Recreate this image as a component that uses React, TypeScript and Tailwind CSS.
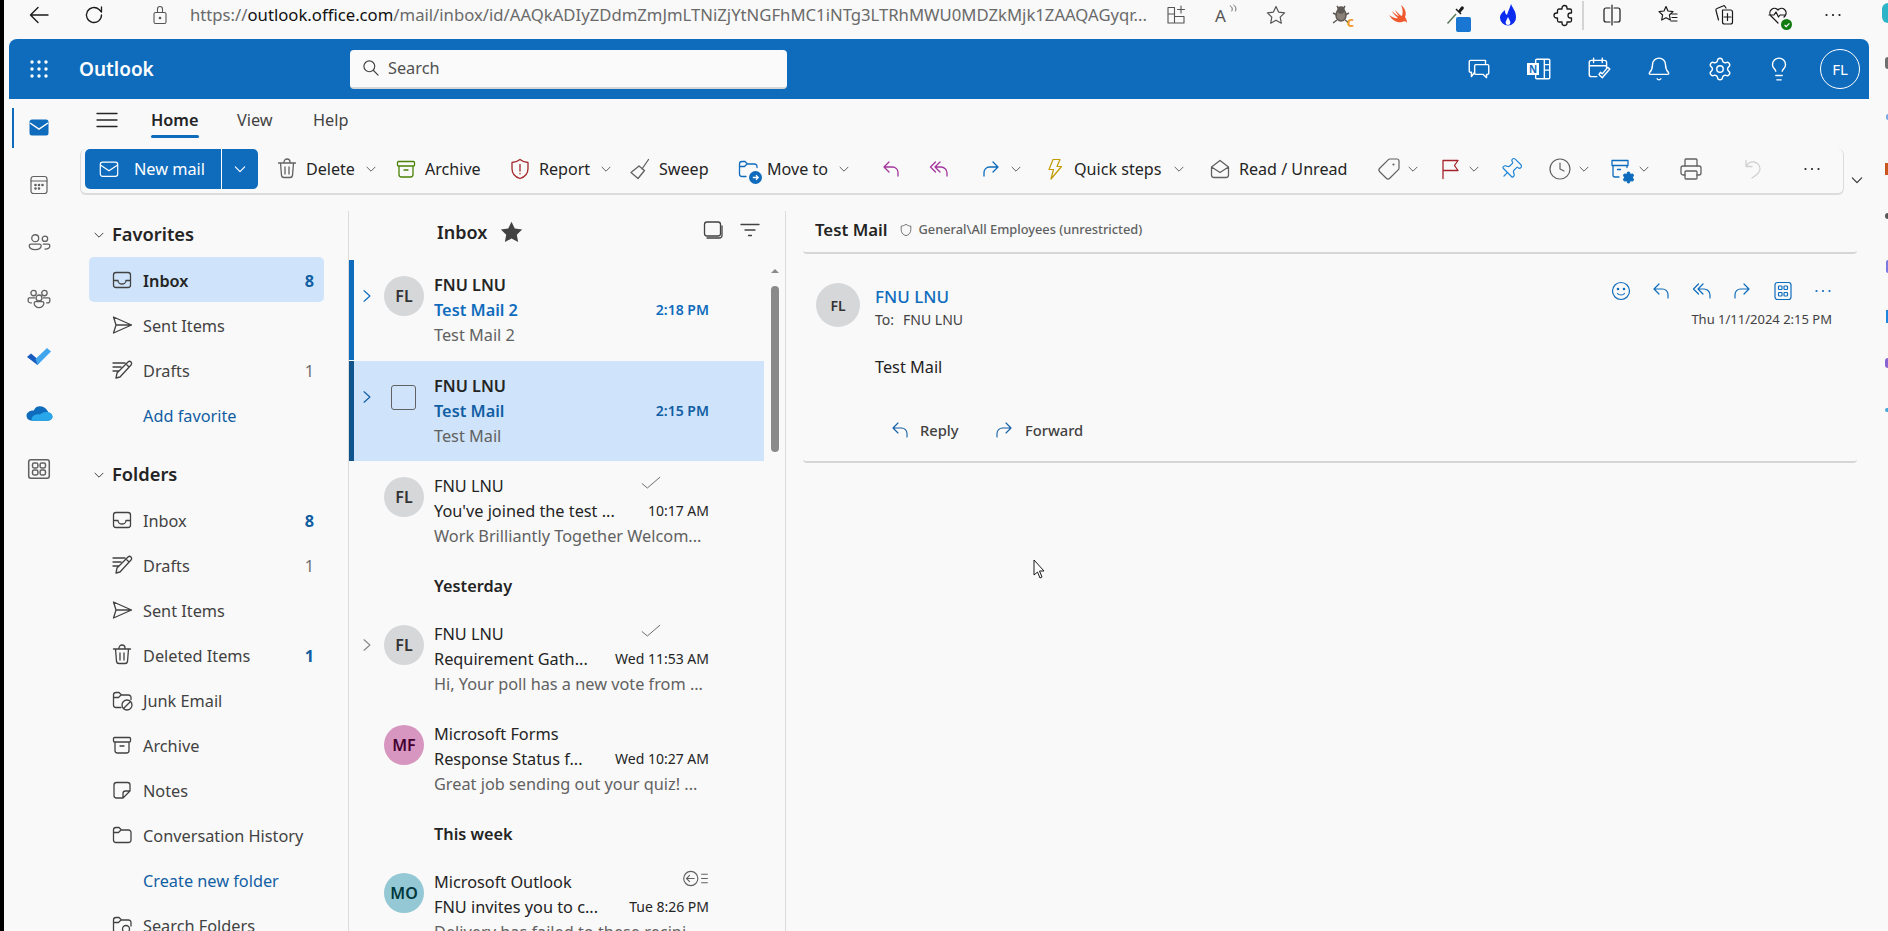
import type { ReactNode } from "react";
import { Settings, Lightbulb, Bell, Tag, Pin, Printer, Clock } from "lucide-react";

function Ico({ className, children, sw = 1.3 }: { className?: string; children: ReactNode; sw?: number }) {
  return (
    <svg viewBox="0 0 24 24" fill="none" stroke="currentColor" strokeWidth={sw} strokeLinecap="round" strokeLinejoin="round" className={className ?? "w-6 h-6 shrink-0"}>
      {children}
    </svg>
  );
}

function Chevron({ className }: { className: string }) {
  return (
    <svg viewBox="0 0 12 12" fill="none" stroke="currentColor" strokeWidth="1" strokeLinecap="round" strokeLinejoin="round" className={className}>
      <path d="M2 4.2L6 8.2L10 4.2" />
    </svg>
  );
}

const replyPath = <path d="M10 5L5 10l5 5M5 10h8.5a5.5 5.5 0 0 1 5.5 5.5V19" />;
const replyAllPath = <path d="M8.5 5L3.5 10l5 5M13 5l-5 5 5 5M8 10h6a6 6 0 0 1 6 6v3" />;
const forwardPath = <path d="M14 5l5 5-5 5M19 10h-8.5A5.5 5.5 0 0 0 5 15.5V19" />;
const moreDots = (
  <>
    <circle cx="5.5" cy="12" r="1.1" fill="currentColor" stroke="none" />
    <circle cx="12" cy="12" r="1.1" fill="currentColor" stroke="none" />
    <circle cx="18.5" cy="12" r="1.1" fill="currentColor" stroke="none" />
  </>
);
const inboxIcon = <path d="M6 4.5h12A2.5 2.5 0 0 1 20.5 7v10a2.5 2.5 0 0 1-2.5 2.5H6A2.5 2.5 0 0 1 3.5 17V7A2.5 2.5 0 0 1 6 4.5zM3.5 12.5H8a4 3.5 0 0 0 8 0h4.5" />;
const sendIcon = <path d="M3.5 4l18 8-18 8 2.5-8zM6 12h15.5" />;
const draftsIcon = <path d="M3 5h12M3 9h8M3 13h5M6 20l1-5L18 4a2 2 0 0 1 3 3L10 19zM16 6l3 3" />;
const trashIcon = <path d="M3.5 6h17M9 6V5a3 3 0 0 1 6 0v1M5.5 6l1 12.5a2.5 2.5 0 0 0 2.5 2h6a2.5 2.5 0 0 0 2.5-2l1-12.5M10 10v7M14 10v7" />;
const folderIcon = <path d="M3.5 7A2.5 2.5 0 0 1 6 4.5h3l2.5 2.5h7A2.5 2.5 0 0 1 21 9.5V17a2.5 2.5 0 0 1-2.5 2.5H6A2.5 2.5 0 0 1 3.5 17zM3.5 9.5h5l2.5-2.5" />;
const junkIcon = (
  <>
    <path d="M11 19.5H6A2.5 2.5 0 0 1 3.5 17V7A2.5 2.5 0 0 1 6 4.5h3L11.5 7h7A2.5 2.5 0 0 1 21 9.5v2M3.5 9.5h5L11 7" />
    <circle cx="17" cy="17" r="5" />
    <path d="M13.5 20.5l7-7" />
  </>
);
const archiveIcon = <path d="M4.5 4.5h15a1 1 0 0 1 1 1V8a1 1 0 0 1-1 1h-15a1 1 0 0 1-1-1V5.5a1 1 0 0 1 1-1zM5 9v8.5A2.5 2.5 0 0 0 7.5 20h9a2.5 2.5 0 0 0 2.5-2.5V9M10 13h4" />;
const notesIcon = <path d="M6.5 4.5h11A2.5 2.5 0 0 1 20 7v6l-7 7H6.5A2.5 2.5 0 0 1 4 17.5V7a2.5 2.5 0 0 1 2.5-2.5zM20 13h-4.5a2.5 2.5 0 0 0-2.5 2.5V20" />;
const searchFolderIcon = (
  <>
    <path d="M11 19.5H6A2.5 2.5 0 0 1 3.5 17V7A2.5 2.5 0 0 1 6 4.5h3L11.5 7h7A2.5 2.5 0 0 1 21 9.5V13M3.5 9.5h5L11 7" />
    <circle cx="16" cy="16" r="3.5" />
  </>
);

function FolderRow({ icon, label, count, active, strong, link }: { icon?: ReactNode; label: string; count?: string; active?: boolean; strong?: boolean; link?: boolean }) {
  return (
    <div className={active ? "h-[45px] w-[235px] ml-[11px] pl-[21px] pr-[10px] flex items-center rounded-[5px] bg-[#cfe4fa]" : "h-[45px] w-[235px] ml-[11px] pl-[21px] pr-[10px] flex items-center"}>
      <span className="w-6 h-6 shrink-0 text-[#424242]">{icon && <Ico>{icon}</Ico>}</span>
      <span className={link ? "ml-[9px] pt-[3px] text-[16.3px] text-[#115ea3]" : active ? "ml-[9px] pt-[3px] text-[16.3px] font-semibold text-[#242424]" : "ml-[9px] pt-[3px] text-[16.3px] text-[#424242]"}>{label}</span>
      {count && <span className={strong ? "ml-auto pt-[3px] text-[16.3px] font-bold text-[#115ea3]" : "ml-auto pt-[3px] text-[16.3px] text-[#707070]"}>{count}</span>}
    </div>
  );
}

function FolderHeader({ label, className }: { label: string; className?: string }) {
  return (
    <div className={className ?? "h-[45px] flex items-center pl-[15px]"}>
      <Chevron className="w-3 h-3 text-[#424242] shrink-0" />
      <span className="ml-[7px] pb-[2px] text-[18.3px] font-semibold text-[#242424]">{label}</span>
    </div>
  );
}

function ToolItem({ width, icon, label, chevron, chevronGap }: { width: string; icon: ReactNode; label?: string; chevron?: boolean; chevronGap?: string }) {
  return (
    <div className={`${width} h-10 flex items-center shrink-0`}>
      {icon}
      {label && <span className="ml-[7px] pt-[1px] text-[16.1px] text-[#242424] whitespace-nowrap">{label}</span>}
      {chevron && <Chevron className={`${chevronGap ?? "ml-[10px]"} w-3 h-3 text-[#616161] shrink-0`} />}
    </div>
  );
}

function Avatar({ initials, className }: { initials: string; className: string }) {
  return <div className={`w-10 h-10 shrink-0 rounded-full flex items-center justify-center text-[16px] font-semibold ${className}`}>{initials}</div>;
}

type Mail = {
  from: string;
  subject: string;
  preview: string;
  time: string;
  initials?: string;
  avatar?: string;
  bar?: string;
  unread?: boolean;
  selected?: boolean;
  chevron?: string;
  status?: "check" | "back";
};

function MailItem({ m }: { m: Mail }) {
  return (
    <div className={m.selected ? "h-[100px] flex shrink-0 bg-[#cfe4fa]" : "h-[100px] flex shrink-0"}>
      <div className={`w-[5px] shrink-0 ${m.bar ?? ""}`} />
      <div className="w-[30px] shrink-0 pl-[6px] pt-[29px]">
        {m.chevron && (
          <svg viewBox="0 0 12 12" fill="none" stroke="currentColor" strokeWidth="1" strokeLinecap="round" strokeLinejoin="round" className={`w-[14px] h-[14px] ${m.chevron}`}>
            <path d="M3.5 1.5L8.5 6L3.5 10.5" />
          </svg>
        )}
      </div>
      <div className="w-10 shrink-0 pt-[16px]">
        {m.initials ? (
          <Avatar initials={m.initials} className={m.avatar ?? ""} />
        ) : (
          <div className="mt-[8px] ml-[7px] w-[25px] h-[25px] border border-[#616161] rounded-[3px]" />
        )}
      </div>
      <div className="ml-[10px] w-[275px] pt-[12px]">
        <div className="h-[25px] flex items-center justify-between">
          <span className={m.unread ? "pt-[1px] text-[16.3px] font-semibold text-[#242424]" : "pt-[1px] text-[16.3px] text-[#242424]"}>{m.from}</span>
          {m.status === "check" && (
            <svg viewBox="0 0 24 16" fill="none" stroke="currentColor" strokeWidth="1" className="w-[22px] h-[15px] text-[#616161] mr-[47px] -mt-[6px]">
              <path d="M2 9l6 5L22 2" />
            </svg>
          )}
          {m.status === "back" && (
            <svg viewBox="0 0 28 18" fill="none" stroke="currentColor" strokeWidth="1.2" className="w-[27px] h-[17px] text-[#616161] -mt-[6px]">
              <circle cx="9" cy="9" r="7.5" />
              <path d="M13 9H5M8 5.5L4.5 9 8 12.5M20 4.5h7M20 9h7M20 13.5h7" />
            </svg>
          )}
        </div>
        <div className="h-[25px] flex items-center justify-between">
          <span className={m.selected ? "pt-[1px] text-[16.3px] font-semibold text-[#115ea3]" : m.unread ? "pt-[1px] text-[16.3px] font-semibold text-[#0f6cbd]" : "pt-[1px] text-[16.3px] text-[#242424]"}>{m.subject}</span>
          <span className={m.selected ? "-mt-[1px] text-[14px] font-semibold text-[#115ea3]" : m.unread ? "-mt-[1px] text-[14px] font-semibold text-[#0f6cbd]" : "-mt-[1px] text-[14px] text-[#242424]"}>{m.time}</span>
        </div>
        <div className="h-[25px] pt-[1px] flex items-center text-[16.3px] text-[#616161] whitespace-nowrap">{m.preview}</div>
      </div>
    </div>
  );
}

function GroupHeader({ label }: { label: string }) {
  return <div className="h-[48px] shrink-0 flex items-center pl-[85px] pt-[2px] text-[16.3px] font-semibold text-[#242424]">{label}</div>;
}

const fl = "bg-[#d6d7d9] text-[#333333]";

export default function App() {
  return (
    <div className="relative w-screen h-screen overflow-hidden bg-[#f9f9f9] border-l-[4px] border-black flex flex-col font-['Noto_Sans','Open_Sans',sans-serif]">
      {/* browser chrome */}
      <div className="h-[39px] shrink-0 flex items-center pl-[23px] pb-[9px]">
        <Ico className="w-6 h-6 shrink-0 text-[#1a1a1a]" sw={1.4}><path d="M21 12H3.5M11 4.5L3.5 12l7.5 7.5" /></Ico>
        <span className="ml-[31px] text-[#1a1a1a]">
          <Ico sw={1.3}><path d="M19.5 12a7.5 7.5 0 1 1-2.4-5.5L19.5 9V4" /></Ico>
        </span>
        <span className="ml-[42px] text-[#555555]">
          <Ico sw={1.1}><path d="M7.5 9.5h9a1.5 1.5 0 0 1 1.5 1.5v8a1.5 1.5 0 0 1-1.5 1.5h-9A1.5 1.5 0 0 1 6 19v-8a1.5 1.5 0 0 1 1.5-1.5zM9.5 9.5V6a2.5 2.5 0 0 1 5 0v3.5" /><circle cx="12" cy="15" r="0.8" fill="currentColor" /></Ico>
        </span>
        <div className="ml-[18px] w-[960px] text-[16.7px] text-[#6a6a6a] whitespace-nowrap overflow-hidden">
          https://<span className="text-[#111111]">outlook.office.com</span>/mail/inbox/id/AAQkADIyZDdmZmJmLTNiZjYtNGFhMC1iNTg3LTRhMWU0MDZkMjk1ZAAQAGyqr...
        </div>
        <span className="ml-[14px] text-[#555555]">
          <Ico sw={1.1}><path d="M4 4.5h6.5v6.5H4zM4 11v9h6.5v-9M10.5 13.5H20V20h-9.5M17 3v7M13.5 6.5H20.5" /></Ico>
        </span>
        <span className="ml-[27px] w-6 h-6 relative text-[#555555] shrink-0 flex items-center">
          <span className="text-[17px] leading-none">A</span>
          <svg viewBox="0 0 12 12" fill="none" stroke="currentColor" strokeWidth="1" className="absolute right-0 top-[1px] w-[11px] h-[11px]"><path d="M2 2c3 1 3 4 2 6M6 1c3 2 3 5 2 7" /></svg>
        </span>
        <span className="ml-[25px] text-[#555555]">
          <Ico sw={1.2}><path d="M12 3.5l2.6 5.6 6 .8-4.4 4.2 1.1 6.1L12 17.2l-5.3 3 1.1-6.1L3.4 9.9l6-.8z" /></Ico>
        </span>
        {/* extensions */}
        <span className="ml-[42px] w-6 h-6 relative shrink-0">
          <svg viewBox="0 0 24 24" className="w-6 h-6" fill="none" stroke="#5f5a55" strokeWidth="1.5"><ellipse cx="11" cy="12" rx="5" ry="6" fill="#8a8178" /><circle cx="11" cy="7" r="3" fill="#5f5a55" /><path d="M7 3l2 3M15 3l-2 3M3 10l4 2M19 10l-4 2M3 20l4-3M19 20l-4-3" /></svg>
          <span className="absolute right-0 bottom-[-2px] text-[14px] leading-none font-bold text-[#f39c27]">c</span>
        </span>
        <span className="ml-[33px] shrink-0">
          <svg viewBox="0 0 24 24" className="w-6 h-6"><path d="M14 2c4 3 6 8 4 12 2 3 2 5 2 6-1-2-3-2-5-1-5 1-9-1-13-7 3 2 7 4 9 3-3-2-5-5-6-7 3 3 6 5 7 5-2-2-3-4-4-6 3 3 6 6 7 6 1-3 1-7-1-11z" fill="#f0592e" /></svg>
        </span>
        <span className="ml-[34px] w-6 h-6 relative shrink-0">
          <svg viewBox="0 0 24 24" className="w-6 h-6" fill="none"><path d="M2.5 20.5L11 11" stroke="#5a7a5a" strokeWidth="1.5" /><path d="M11 6l5 5" stroke="#1a1a1a" strokeWidth="1.5" /><path d="M13 8l3-4a1.5 1.5 0 0 1 2.5 2l-3.5 4z" fill="#1a1a1a" /></svg>
          <span className="absolute left-[11px] top-[14px] w-[15px] h-[15px] rounded-[2px] bg-[#1976d2]" />
        </span>
        <span className="ml-[27px] shrink-0">
          <svg viewBox="0 0 24 24" className="w-6 h-6"><path d="M15 1c2 5 5 7 5 13a8 8 0 0 1-16 1c0-4 3-6 5-8 0 2 0 4 2 5 1-4 3-7 4-11zM12 22c-2 0-3-2-2-4l2-4 2 4c1 2 0 4-2 4z" fill="#0b2cf0" fillRule="evenodd" /></svg>
        </span>
        <span className="ml-[32px] text-[#1a1a1a]">
          <Ico sw={1.3}><path d="M10 5a2.5 2.5 0 0 1 5 0v1h3a1.5 1.5 0 0 1 1.5 1.5V10h-1a2.5 2.5 0 0 0 0 5h1v2.5A1.5 1.5 0 0 1 18 19h-3v1a2.5 2.5 0 0 1-5 0v-1H7a1.5 1.5 0 0 1-1.5-1.5V15h-1a2.5 2.5 0 0 1 0-5h1V7.5A1.5 1.5 0 0 1 7 6h3z" /></Ico>
        </span>
        <span className="ml-[6px] w-[2px] h-[29px] bg-[#d4d4d4] shrink-0" />
        <span className="ml-[16px] text-[#1a1a1a]">
          <Ico sw={1.2}><path d="M12 2v20M10 5H6a2 2 0 0 0-2 2v10a2 2 0 0 0 2 2h4M14 5h4a2 2 0 0 1 2 2v10a2 2 0 0 1-2 2h-4" /></Ico>
        </span>
        <span className="ml-[32px] text-[#1a1a1a]">
          <Ico sw={1.2}><path d="M10 3.5l2 4.5 5 .6-3.6 3.4.9 5L10 14.7 5.7 17l.9-5L3 8.6 8 8zM16 11h5M16 14.5h5M15 18h6" /></Ico>
        </span>
        <span className="ml-[32px] text-[#1a1a1a]">
          <Ico sw={1.2}><path d="M14 5l-1-1.5a1.5 1.5 0 0 0-2-.5L5 5.5A1.5 1.5 0 0 0 4 7.5L6.5 17M10.5 7h8a2 2 0 0 1 2 2v10a2 2 0 0 1-2 2h-6a2 2 0 0 1-2-2v-12zM15.500 10.500v7M12 14h7" /></Ico>
        </span>
        <span className="ml-[30px] w-6 h-6 relative text-[#1a1a1a] shrink-0">
          <Ico sw={1.2}><path d="M12 20l-7-7a4.5 4.5 0 0 1 7-6 4.5 4.5 0 0 1 7 6l-1 1M3 12h5l2-3 2.5 5 1.5-2h5" /></Ico>
          <span className="absolute right-[-2px] bottom-[-3px] w-[11px] h-[11px] rounded-full bg-[#107c10] flex items-center justify-center">
            <svg viewBox="0 0 10 10" className="w-2 h-2" fill="none" stroke="#ffffff" strokeWidth="1.5"><path d="M2 5l2 2 4-4" /></svg>
          </span>
        </span>
        <span className="ml-[31px] text-[#1a1a1a]"><Ico>{moreDots}</Ico></span>
      </div>

      {/* app header */}
      <div className="ml-[5px] w-[1860px] h-[60px] shrink-0 bg-[#0f6cbd] rounded-t-[8px] flex items-center text-white">
        <svg viewBox="0 0 20 20" className="ml-[20px] w-5 h-5 shrink-0" fill="currentColor">
          <circle cx="3" cy="3" r="1.7" /><circle cx="10" cy="3" r="1.7" /><circle cx="17" cy="3" r="1.7" />
          <circle cx="3" cy="10" r="1.7" /><circle cx="10" cy="10" r="1.7" /><circle cx="17" cy="10" r="1.7" />
          <circle cx="3" cy="17" r="1.7" /><circle cx="10" cy="17" r="1.7" /><circle cx="17" cy="17" r="1.7" />
        </svg>
        <span className="ml-[30px] w-[271px] text-[19px] font-semibold">Outlook</span>
        <div className="w-[437px] h-[39px] bg-[#fafafa] rounded-[4px] flex items-center pl-[11px] border-b-2 border-[#d6d6d6] text-[#424242]">
          <Ico className="w-5 h-5 shrink-0" sw={1.4}><circle cx="10" cy="10" r="6.5" /><path d="M15 15l5.5 5.5" /></Ico>
          <span className="ml-[7px] text-[16.3px] text-[#505050]">Search</span>
        </div>
        <Ico className="ml-[679px] w-[26px] h-[26px] shrink-0" sw={1.3}><path d="M4 4h14v3M4 4a1 1 0 0 0-1 1v9a1 1 0 0 0 1 1h1v4l3-4M9 8h11a1 1 0 0 1 1 1v7a1 1 0 0 1-1 1h-1v3l-3-3H9a1 1 0 0 1-1-1V9a1 1 0 0 1 1-1z" /></Ico>
        <span className="ml-[35px] w-[26px] h-[26px] relative shrink-0">
          <svg viewBox="0 0 24 24" className="w-[26px] h-[26px]" fill="none" stroke="currentColor" strokeWidth="1.3"><path d="M9 3h11a1 1 0 0 1 1 1v16a1 1 0 0 1-1 1H9a1 1 0 0 1-1-1V4a1 1 0 0 1 1-1zM16 3v18M16 8h5M16 13h5" /></svg>
          <span className="absolute left-0 top-[7px] w-[12px] h-[12px] bg-white text-[#0f6cbd] text-[10px] font-bold leading-[12px] text-center">N</span>
        </span>
        <Ico className="ml-[33px] w-[26px] h-[26px] shrink-0" sw={1.3}><path d="M10 19H5a2 2 0 0 1-2-2V6a2 2 0 0 1 2-2h12a2 2 0 0 1 2 2v5M3 9h16M7 2v4M15 2v4M12 17l3 3 7-8-2-1.5-5 6-1.5-1.5z" /></Ico>
        <Bell className="ml-[34px] w-[26px] h-[26px] shrink-0" strokeWidth={1.3} />
        <Settings className="ml-[35px] w-[26px] h-[26px] shrink-0" strokeWidth={1.3} />
        <Lightbulb className="ml-[33px] w-[26px] h-[26px] shrink-0" strokeWidth={1.3} />
        <div className="ml-[28px] w-10 h-10 rounded-full border border-white flex items-center justify-center text-[15px] shrink-0">FL</div>
      </div>

      <div className="flex flex-1 min-h-0">
        {/* left rail */}
        <div className="w-[74px] shrink-0 flex flex-col">
          <div className="relative h-[57px] flex items-center justify-center text-[#0f6cbd]">
            <span className="absolute left-[8px] top-[9px] w-[2px] h-[40px] bg-[#0f6cbd]" />
            <svg viewBox="0 0 24 24" className="w-6 h-6 ml-[-4px] -mt-[2px]">
              <rect x="2.5" y="4.5" width="19" height="16" rx="2.5" fill="#0f6cbd" />
              <path d="M3 8l9 6 9-6" fill="none" stroke="#ffffff" strokeWidth="1.5" />
            </svg>
          </div>
          <div className="h-[57px] flex items-center justify-center text-[#616161]">
            <Ico className="w-6 h-6 ml-[-4px]" sw={1.2}><rect x="4" y="3.5" width="16" height="17" rx="2.5" /><path d="M4 8h16" /><circle cx="8.5" cy="12" r="0.7" fill="currentColor" /><circle cx="12" cy="12" r="0.7" fill="currentColor" /><circle cx="15.5" cy="12" r="0.7" fill="currentColor" /><circle cx="8.5" cy="15.5" r="0.7" fill="currentColor" /><circle cx="12" cy="15.5" r="0.7" fill="currentColor" /></Ico>
          </div>
          <div className="h-[57px] flex items-center justify-center text-[#616161]">
            <Ico className="w-[26px] h-[26px] ml-[-4px]" sw={1.2}><circle cx="8.5" cy="8.5" r="3.2" /><circle cx="17.5" cy="9" r="2.5" /><path d="M3 15.5a1.5 1.5 0 0 1 1.5-1.5h8a1.5 1.5 0 0 1 1.5 1.5c0 2-2 3.500-5.500 3.500S3 17.500 3 15.500zM16 14h4.500a1.500 1.500 0 0 1 1.500 1.500c0 1.700-1.700 3-4.500 3" /></Ico>
          </div>
          <div className="h-[57px] flex items-center justify-center text-[#616161]">
            <Ico className="w-[26px] h-[26px] ml-[-4px]" sw={1.2}><circle cx="7" cy="6.5" r="2.5" /><circle cx="17" cy="6.5" r="2.5" /><circle cx="12" cy="11" r="2.7" /><path d="M7.5 16a1.5 1.5 0 0 1 1.5-1.5h6a1.5 1.5 0 0 1 1.5 1.5c0 2-2 4-4.5 4s-4.5-2-4.5-4zM5 15.5H4a2 2 0 0 1-2-2V12a1 1 0 0 1 1-1h5M19 15.5h1a2 2 0 0 0 2-2V12a1 1 0 0 0-1-1h-5" /></Ico>
          </div>
          <div className="h-[57px] flex items-center justify-center">
            <svg viewBox="0 0 26 20" className="w-[26px] h-5 ml-[-4px]">
              <path d="M1 11l4-3.5 6 5 3 3.5-2.5 3z" fill="#185abd" />
              <path d="M9.5 13L21 2l4 3.5L11.5 19z" fill="#41a5ee" />
            </svg>
          </div>
          <div className="h-[57px] flex items-center justify-center">
            <svg viewBox="0 0 26 16" className="w-[27px] h-[17px] ml-[-4px] mt-[2px]">
              <path d="M6 15h15c3 0 4.5-2 4.5-4s-2-4-4-4c-1-3-4-6-8-6-3 0-5 1.5-6 4-4 0-7 2-7 5s2 5 5.5 5z" fill="#0f6cbd" />
              <path d="M6 15h15c3 0 4.5-2 4.5-4s-2-4-4-4c-3-1-6 0-8 2-3-1-8 1-8 4 0 1 0 2 .5 2z" fill="#28a8ea" />
            </svg>
          </div>
          <div className="h-[57px] flex items-center justify-center text-[#616161]">
            <Ico className="w-[26px] h-[26px] ml-[-4px] -mt-[2px]" sw={1.4}><rect x="2.5" y="3.5" width="19" height="17" rx="2" /><rect x="6" y="6.5" width="5" height="4.5" rx="1.5" /><rect x="13" y="6.5" width="5" height="4.5" rx="1.5" /><rect x="6" y="13" width="5" height="4.5" rx="1.5" /><rect x="13" y="13" width="5" height="4.5" rx="1.5" /></Ico>
          </div>
        </div>

        <div className="flex-1 min-w-0 flex flex-col">
          {/* tabs */}
          <div className="h-[42px] shrink-0 flex items-center pl-[17px] text-[16.3px] text-[#424242]">
            <Ico className="w-6 h-6 shrink-0 text-[#242424]" sw={1.3}><path d="M2 5.5h20M2 12h20M2 18.5h20" /></Ico>
            <div className="ml-[32px] w-[86px] relative font-semibold text-[#242424]">
              Home
              <span className="absolute left-0 top-[27px] w-[48px] h-[3px] rounded-full bg-[#0f6cbd]" />
            </div>
            <span className="w-[76px]">View</span>
            <span>Help</span>
          </div>

          {/* toolbar */}
          <div className="mt-[8px] ml-[2px] w-[1764px] h-[46px] shrink-0 flex rounded-[6px] border-b-2 border-r border-l border-[#dcdcdc] pl-[4px] bg-[#f9f9f9]">
            <div className="w-[173px] h-10 shrink-0 flex rounded-[5px] bg-[#0f6cbd] text-white">
              <div className="w-[137px] flex items-center pl-[13px] border-r border-white">
                <Ico className="w-[22px] h-[22px] shrink-0" sw={1.3}><rect x="2.5" y="4.5" width="19" height="15.5" rx="2.5" /><path d="M3 8l9 6 9-6" /></Ico>
                <span className="ml-[14px] pt-[1px] text-[16.3px]">New mail</span>
              </div>
              <div className="flex-1 flex items-center justify-center"><Chevron className="w-[14px] h-[14px]" /></div>
            </div>
            <div className="w-[17px] shrink-0" />
            <ToolItem width="w-[119px]" label="Delete" chevron icon={<span className="text-[#616161]"><Ico>{trashIcon}</Ico></span>} />
            <ToolItem width="w-[114px]" label="Archive" icon={<span className="text-[#498205]"><Ico>{archiveIcon}</Ico></span>} />
            <ToolItem width="w-[120px]" label="Report" chevron icon={<span className="text-[#a4262c]"><Ico><path d="M12 2.5c2.5 2 5 3 8 3v6c0 5-3 8.5-8 10-5-1.5-8-5-8-10v-6c3 0 5.5-1 8-3zM12 7.5v6.5M12 16.5v.3" /></Ico></span>} />
            <ToolItem width="w-[108px]" label="Sweep" icon={<span className="text-[#616161]"><Ico><path d="M20.5 2.5L14 12M11 9l5.5 4.5L10 21.5 3 15.5z" /></Ico></span>} />
            <ToolItem width="w-[143px]" label="Move to" chevron icon={
              <span className="relative w-6 h-6 shrink-0 text-[#0f6cbd]">
                <Ico><path d="M10 19.5H6A2.5 2.5 0 0 1 3.5 17V7A2.5 2.5 0 0 1 6 4.5h3L11.5 7h7A2.5 2.5 0 0 1 21 9.5v1M3.5 9.5h5L11 7" /></Ico>
                <span className="absolute right-[-2px] bottom-[-3px] w-[13px] h-[13px] rounded-full bg-[#0f6cbd] flex items-center justify-center">
                  <svg viewBox="0 0 10 10" className="w-[9px] h-[9px]" fill="none" stroke="#ffffff" strokeWidth="1.4"><path d="M2 5h6M5.5 2.5L8 5 5.5 7.5" /></svg>
                </span>
              </span>} />
            <ToolItem width="w-[48px]" icon={<span className="text-[#a3359f]"><Ico>{replyPath}</Ico></span>} />
            <ToolItem width="w-[52px]" icon={<span className="text-[#a3359f]"><Ico>{replyAllPath}</Ico></span>} />
            <ToolItem width="w-[64px]" chevron chevronGap="ml-[7px]" icon={<span className="text-[#0f6cbd]"><Ico>{forwardPath}</Ico></span>} />
            <ToolItem width="w-[165px]" label="Quick steps" chevron chevronGap="ml-[12px]" icon={<span className="text-[#c19c00]"><Ico sw={1.2}><path d="M10 2.5h7l-3 7h4.5L8 22l2.5-9.5H6z" /></Ico></span>} />
            <ToolItem width="w-[169px]" label="Read / Unread" icon={<span className="text-[#616161]"><Ico><path d="M3.5 10L12 3.5l8.5 6.5v8a2.5 2.5 0 0 1-2.5 2.5H6A2.5 2.5 0 0 1 3.5 18zM3.5 10l8.5 5.5 8.5-5.5" /></Ico></span>} />
            <ToolItem width="w-[61px]" chevron chevronGap="ml-[6px]" icon={<Tag className="w-6 h-6 text-[#616161] shrink-0 -scale-x-100" strokeWidth={1.2} />} />
            <ToolItem width="w-[61px]" chevron chevronGap="ml-[6px]" icon={<span className="text-[#a4262c]"><Ico><path d="M5 21.5V3.5h15l-3.5 5 3.5 5H5" /></Ico></span>} />
            <ToolItem width="w-[49px]" icon={<Pin className="w-6 h-6 text-[#1f86d8] shrink-0 rotate-45" strokeWidth={1.2} />} />
            <ToolItem width="w-[60px]" chevron chevronGap="ml-[6px]" icon={<Clock className="w-6 h-6 text-[#616161] shrink-0" strokeWidth={1.2} />} />
            <ToolItem width="w-[71px]" chevron chevronGap="ml-[6px]" icon={
              <span className="relative w-6 h-6 shrink-0 text-[#0f6cbd]">
                <Ico><path d="M4 3.5h16v5H4zM5 8.5V18a2 2 0 0 0 2 2h4M19 8.5v2M9.5 12.5h3" /></Ico>
                <Settings className="absolute right-[-3px] bottom-[-3px] w-[13px] h-[13px] fill-[#0f6cbd]" strokeWidth={2} />
              </span>} />
            <ToolItem width="w-[62px]" icon={<Printer className="w-6 h-6 text-[#616161] shrink-0" strokeWidth={1.3} />} />
            <ToolItem width="w-[59px]" icon={<span className="text-[#d1d1d1]"><Ico><path d="M5 3.5v6h6M5 9.5C7 6 10 4.5 13 5c4 .7 6 4 6 7 0 3-3 6-8 9" /></Ico></span>} />
            <ToolItem width="w-[24px]" icon={<span className="text-[#242424]"><Ico>{moreDots}</Ico></span>} />
            <Chevron className="ml-[26px] mt-[24px] w-[14px] h-[14px] text-[#333333] shrink-0" />
          </div>

          <div className="flex flex-1 min-h-0">
            {/* folders */}
            <div className="w-[270px] shrink-0 overflow-hidden">
              <FolderHeader label="Favorites" className="h-[45px] mt-[17px] flex items-center pl-[15px]" />
              <FolderRow active icon={inboxIcon} label="Inbox" count="8" strong />
              <FolderRow icon={sendIcon} label="Sent Items" />
              <FolderRow icon={draftsIcon} label="Drafts" count="1" />
              <FolderRow link label="Add favorite" />
              <FolderHeader label="Folders" className="h-[45px] mt-[15px] flex items-center pl-[15px]" />
              <FolderRow icon={inboxIcon} label="Inbox" count="8" strong />
              <FolderRow icon={draftsIcon} label="Drafts" count="1" />
              <FolderRow icon={sendIcon} label="Sent Items" />
              <FolderRow icon={trashIcon} label="Deleted Items" count="1" strong />
              <FolderRow icon={junkIcon} label="Junk Email" />
              <FolderRow icon={archiveIcon} label="Archive" />
              <FolderRow icon={notesIcon} label="Notes" />
              <FolderRow icon={folderIcon} label="Conversation History" />
              <FolderRow link label="Create new folder" />
              <FolderRow icon={searchFolderIcon} label="Search Folders" />
            </div>

            {/* message list */}
            <div className="w-[438px] shrink-0 mt-[16px] border-l border-r border-[#dcdcdc] flex flex-col min-h-0 overflow-hidden">
              <div className="h-[49px] shrink-0 flex items-start pt-[8px] pl-[88px] pr-[23px] text-[#424242]">
                <span className="text-[18px] font-semibold text-[#242424]">Inbox</span>
                <svg viewBox="0 0 24 24" className="ml-[11px] w-[27px] h-[27px]" fill="currentColor"><path d="M12 2.5l2.9 6 6.6.9-4.800 4.600 1.200 6.500L12 17.400l-5.900 3.100 1.200-6.500L2.500 9.400l6.600-.9z" /></svg>
                <Ico className="ml-auto w-6 h-6 shrink-0 -mt-[1px]" sw={1.3}><rect x="3.5" y="4" width="16" height="14" rx="2.5" /><path d="M21 8v9.5a2.5 2.5 0 0 1-2.5 2.5H6" /></Ico>
                <Ico className="ml-[13px] w-6 h-6 shrink-0 -mt-[1px]" sw={1.3}><path d="M3 6.5h18M7 12h10M10.5 17.5h3" /></Ico>
              </div>
              <div className="flex flex-1 min-h-0">
                <div className="w-[415px] shrink-0 flex flex-col">
                  <MailItem m={{ from: "FNU LNU", subject: "Test Mail 2", preview: "Test Mail 2", time: "2:18 PM", initials: "FL", avatar: fl, bar: "bg-[#0f6cbd]", unread: true, chevron: "text-[#0f6cbd]" }} />
                  <div className="h-px shrink-0" />
                  <MailItem m={{ from: "FNU LNU", subject: "Test Mail", preview: "Test Mail", time: "2:15 PM", bar: "bg-[#0f548c]", unread: true, selected: true, chevron: "text-[#115ea3]" }} />
                  <MailItem m={{ from: "FNU LNU", subject: "You've joined the test ...", preview: "Work Brilliantly Together Welcom...", time: "10:17 AM", initials: "FL", avatar: fl, status: "check" }} />
                  <GroupHeader label="Yesterday" />
                  <MailItem m={{ from: "FNU LNU", subject: "Requirement Gath...", preview: "Hi, Your poll has a new vote from ...", time: "Wed 11:53 AM", initials: "FL", avatar: fl, chevron: "text-[#8a8a8a]", status: "check" }} />
                  <MailItem m={{ from: "Microsoft Forms", subject: "Response Status f...", preview: "Great job sending out your quiz! ...", time: "Wed 10:27 AM", initials: "MF", avatar: "bg-[#d696c0] text-[#43002f]" }} />
                  <GroupHeader label="This week" />
                  <MailItem m={{ from: "Microsoft Outlook", subject: "FNU invites you to c...", preview: "Delivery has failed to these recipi...", time: "Tue 8:26 PM", initials: "MO", avatar: "bg-[#94c8d4] text-[#00373f]", status: "back" }} />
                </div>
                <div className="flex-1 flex flex-col items-center pt-[9px]">
                  <span className="w-0 h-0 border-l-[4px] border-r-[4px] border-b-[4px] border-l-transparent border-r-transparent border-b-[#8a8a8a]" />
                  <div className="mt-[13px] w-2 h-[166px] rounded-full bg-[#8a8a8a]" />
                </div>
              </div>
            </div>

            {/* reading pane */}
            <div className="flex-1 min-w-0 pl-[17px]">
              <div className="w-[1054px] h-[59px] pt-[13px] pl-[12px] flex items-center rounded-b-[4px] border-b-2 border-[#d6d6d6]">
                <span className="text-[16.8px] font-semibold text-[#242424]">Test Mail</span>
                <svg viewBox="0 0 16 16" fill="none" stroke="#616161" strokeWidth="1" className="ml-[11px] w-[14px] h-[14px] shrink-0"><path d="M8 1.5c1.8 1.3 3.5 2 5.5 2v4c0 3.5-2 6-5.5 7-3.5-1-5.5-3.5-5.5-7v-4c2 0 3.7-.7 5.5-2z" /></svg>
                <span className="ml-[6px] text-[12.8px] font-medium text-[#616161]">General\All Employees (unrestricted)</span>
              </div>
              <div className="w-[1054px] h-[209px] rounded-b-[4px] border-b-2 border-[#d6d6d6] pt-[29px] pl-[13px] pr-[25px]">
                <div className="flex items-start">
                  <div className="w-11 h-11 shrink-0 rounded-full bg-[#d6d7d9] text-[#333333] flex items-center justify-center text-[14px] font-semibold">FL</div>
                  <div className="ml-[15px] mt-[2px]">
                    <div className="h-[23px] flex items-center text-[17px] font-medium text-[#0f6cbd]">FNU LNU</div>
                    <div className="h-[23px] flex items-center text-[14px] text-[#424242]">To:<span className="ml-[9px]">FNU LNU</span></div>
                  </div>
                  <div className="ml-auto -mt-[4px] flex flex-col items-end">
                    <div className="h-6 flex items-center text-[#0f6cbd] gap-[16.5px] -mr-[3px]">
                      <Ico sw={1.2}><circle cx="12" cy="12" r="8.5" /><path d="M8.5 14.5c1.5 2 5.5 2 7 0" /><circle cx="9" cy="10" r="0.7" fill="currentColor" /><circle cx="15" cy="10" r="0.7" fill="currentColor" /></Ico>
                      <Ico sw={1.2}>{replyPath}</Ico>
                      <Ico sw={1.2}>{replyAllPath}</Ico>
                      <Ico sw={1.2}>{forwardPath}</Ico>
                      <Ico sw={1.2}><rect x="4" y="3.5" width="16" height="17" rx="2.5" /><rect x="7.5" y="7" width="3.5" height="3.5" rx="0.8" /><rect x="13" y="7" width="3.5" height="3.5" rx="0.8" /><rect x="7.5" y="13.5" width="3.5" height="3.5" rx="0.8" /><rect x="13" y="13.5" width="3.5" height="3.5" rx="0.8" /></Ico>
                      <Ico sw={1.2}>{moreDots}</Ico>
                    </div>
                    <div className="mt-[5px] h-6 flex items-center text-[13px] text-[#424242]">Thu 1/11/2024 2:15 PM</div>
                  </div>
                </div>
                <div className="ml-[59px] mt-[23px] h-6 flex items-center text-[16.3px] text-[#242424]">Test Mail</div>
                <div className="ml-[72px] mt-[34px] h-[34px] flex items-center">
                  <div className="w-[104px] flex items-center">
                    <span className="text-[#115ea3]"><Ico sw={1.1}>{replyPath}</Ico></span>
                    <span className="ml-[8px] text-[14.7px] font-medium text-[#424242]">Reply</span>
                  </div>
                  <div className="flex items-center">
                    <span className="text-[#115ea3]"><Ico sw={1.1}>{forwardPath}</Ico></span>
                    <span className="ml-[9px] text-[14.7px] font-medium text-[#424242]">Forward</span>
                  </div>
                </div>
              </div>
            </div>
          </div>
        </div>
      </div>

      {/* mouse pointer */}
      <svg viewBox="0 0 12 20" className="absolute left-[1029px] top-[559px] w-3 h-5" fill="#ffffff" stroke="#1a1a1a" strokeWidth="1">
        <path d="M1 1v15l3.5-3 2.5 6 2-1-2.5-6H11z" />
      </svg>

      {/* sidebar of the browser, cut off by the window edge */}
      <span className="absolute right-0 top-[3px] w-[6px] h-[20px] rounded-l-full bg-[#2cb5c8]" />
      <span className="absolute right-0 top-[57px] w-[3px] h-[12px] rounded-l-full bg-[#6f6f6f]" />
      <span className="absolute right-0 top-[114px] w-[2px] h-[6px] rounded-l-full bg-[#7aa9e6]" />
      <span className="absolute right-0 top-[163px] w-[3px] h-[12px] bg-[#c8571e]" />
      <span className="absolute right-0 top-[213px] w-[3px] h-[6px] rounded-l-full bg-[#555555]" />
      <span className="absolute right-0 top-[260px] w-[2px] h-[13px] rounded-l-full bg-[#7a7ae0]" />
      <span className="absolute right-0 top-[310px] w-[2px] h-[13px] bg-[#1d86e0]" />
      <span className="absolute right-0 top-[358px] w-[3px] h-[10px] rounded-l-full bg-[#8a63d2]" />
      <span className="absolute right-0 top-[408px] w-[3px] h-[4px] rounded-l-full bg-[#4aa8e0]" />
    </div>
  );
}
